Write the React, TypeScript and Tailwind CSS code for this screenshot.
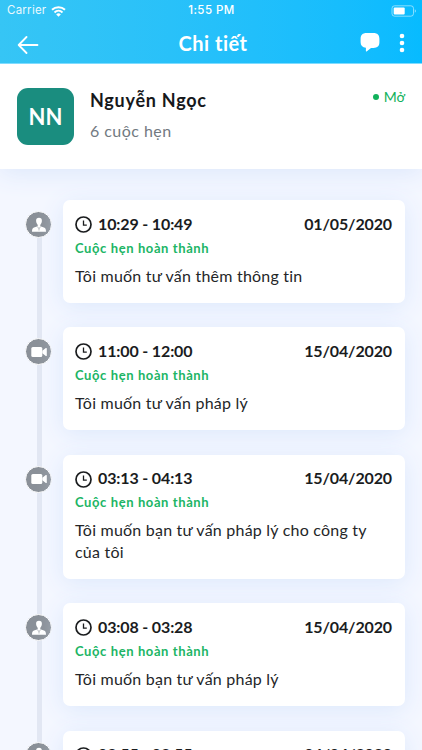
type Appointment = {
  kind: 'person' | 'video';
  time: string;
  date: string;
  note: string;
};

const appointments: Appointment[] = [
  { kind: 'person', time: '10:29 - 10:49', date: '01/05/2020', note: 'Tôi muốn tư vấn thêm thông tin' },
  { kind: 'video', time: '11:00 - 12:00', date: '15/04/2020', note: 'Tôi muốn tư vấn pháp lý' },
  { kind: 'video', time: '03:13 - 04:13', date: '15/04/2020', note: 'Tôi muốn bạn tư vấn pháp lý cho công ty của tôi' },
  { kind: 'person', time: '03:08 - 03:28', date: '15/04/2020', note: 'Tôi muốn bạn tư vấn pháp lý' },
  { kind: 'person', time: '02:55 - 02:55', date: '04/04/2020', note: 'Tôi muốn tư vấn pháp lý' },
];

function StatusBar() {
  return (
    <div className="grid h-[22px] grid-cols-3 items-center pl-[7px] pr-[5px] font-['Inter'] text-[11.5px] leading-none">
      <div className="flex items-center gap-[5px]">
        <span className="tracking-[0.25px] opacity-90">Carrier</span>
        <svg width="15" height="11" viewBox="0 0 15 11" fill="none" stroke="currentColor" strokeWidth="2">
          <path d="M1 3.7a9.6 9.6 0 0 1 13 0" />
          <path d="M3.5 6.4a5.9 5.9 0 0 1 8 0" />
          <path d="M7.5 10.8 5.2 8.4a3.3 3.3 0 0 1 4.6 0z" fill="currentColor" stroke="none" />
        </svg>
      </div>
      <span className="-ml-px text-center text-[11.5px] font-medium tracking-[0.45px]">1:55 PM</span>
      <svg className="justify-self-end" width="26" height="12" viewBox="0 0 26 12">
        <rect x="1" y=".8" width="21.5" height="10.4" rx="2.6" fill="none" stroke="#fff" strokeOpacity=".5" />
        <rect x="2.7" y="2.5" width="11" height="7" rx="1" fill="#fff" />
        <path d="M23.8 4.2a2 2 0 0 1 0 3.6z" fill="#fff" fillOpacity=".55" />
      </svg>
    </div>
  );
}

function Header() {
  return (
    <header className="relative z-20 h-16 shrink-0 border-b border-[#7fdcff] bg-linear-to-r from-[#36c5f5] to-[#07bbff] text-white">
      <StatusBar />
      <div className="flex h-[42px] items-center justify-between px-[17px]">
        <svg className="mt-[3px]" width="22" height="18" viewBox="0 0 22 18" fill="none" stroke="currentColor" strokeWidth="1.8" strokeLinecap="round" strokeLinejoin="round">
          <path d="M20.5 9H1.9M9.5 1 1.7 9l7.8 8" />
        </svg>
        <h1 className="ml-[27px] text-[20px] font-bold tracking-[0.5px]">Chi tiết</h1>
        <div className="flex items-center gap-[19px]">
          <svg width="20" height="20" viewBox="0 0 20 20" fill="currentColor">
            <path d="M6.5 0h7c3.9 0 5.9 2.1 5.9 5.7v3.5c0 3.6-2 5.7-5.9 5.7H11l-4.4 3.5c-.4.3-.7.1-.7-.3v-3.3C2.4 14.4.6 12.4.6 9.2V5.7C.6 2.1 2.6 0 6.5 0z" />
          </svg>
          <svg className="-mt-px" width="6" height="20" viewBox="0 0 6 20" fill="currentColor">
            <circle cx="3" cy="3" r="2.3" />
            <circle cx="3" cy="10" r="2.3" />
            <circle cx="3" cy="17" r="2.3" />
          </svg>
        </div>
      </div>
    </header>
  );
}

function Profile() {
  return (
    <section className="flex h-[105px] shrink-0 items-start bg-white px-[17px] pt-6 shadow-[0_4px_24px_#dce7fb]">
      <div className="flex size-[57px] items-center justify-center rounded-[11px] bg-[#1a8d7f] text-[22px] font-bold text-white">NN</div>
      <div className="ml-4 flex-1">
        <h2 className="text-[18px] font-bold leading-6 tracking-[0.75px] text-[#16181b]">Nguyễn Ngọc</h2>
        <p className="mt-[7px] text-[16px] leading-6 tracking-[0.45px] text-[#727981]">6 cuộc hẹn</p>
      </div>
      <div className="flex items-center gap-[5px] text-[14px] leading-[18px] text-[#11b15b]">
        <span className="size-1.5 rounded-full bg-[#11b15b]" />
        Mở
      </div>
    </section>
  );
}

function KindBadge({ kind }: { kind: Appointment['kind'] }) {
  return (
    <div className="mt-[11px] flex size-[27px] shrink-0 items-center justify-center rounded-full border-[1.5px] border-white bg-[#8a9098] text-white">
      {kind === 'person' ? (
        <svg width="16" height="16" viewBox="0 0 16 16">
          <path fill="currentColor" d="M8 .8c2 0 3 1.2 2.9 3.2C10.8 6.2 9.7 8 8 8S5.200 6.200 5.100 4C5 2 6 .8 8 .8z" />
          <path fill="currentColor" d="M6.700 7h2.600v2.200l3.700 1.300c1.300.5 2 1.500 2 4.200H1c0-2.700.7-3.700 2-4.200l3.700-1.300z" />
          <path d="m6.300 9.600 1.700 2 1.700-2M8 11.400v2.100" fill="none" stroke="#8a9098" strokeWidth=".6" />
        </svg>
      ) : (
        <svg width="16" height="12" viewBox="0 0 16 12" fill="currentColor">
          <rect x=".3" y="1" width="11" height="10" rx="1.5" />
          <path d="m11.3 4.8 3.5-2.7c.5-.4 1-.2 1 .4v7c0 .6-.5.8-1 .4l-3.5-2.7z" />
        </svg>
      )}
    </div>
  );
}

function AppointmentRow({ kind, time, date, note }: Appointment) {
  return (
    <li className="flex items-start">
      <KindBadge kind={kind} />
      <article className="ml-[10.5px] flex-1 rounded-[7px] bg-white pb-[17px] pl-[12.5px] pr-[13px] pt-[11.5px] shadow-[0_4px_24px_#dce8fc]">
        <div className="flex h-6 items-center text-[16px] font-bold leading-6 tracking-[-0.14px] text-[#1a1c1e]">
          <svg className="mt-[2px]" width="17" height="17" viewBox="0 0 17 17" fill="none" stroke="currentColor" strokeWidth="1.7">
            <circle cx="8.5" cy="8.5" r="7.5" />
            <path d="M8.5 4.5v4.7h3.3" strokeWidth="1.3" />
          </svg>
          <span className="ml-1.5 flex-1">{time}</span>
          <span>{date}</span>
        </div>
        <p className="text-[13px] font-bold leading-6 tracking-[0.6px] text-[#20b565]">Cuộc hẹn hoàn thành</p>
        <p className="mt-[5px] text-[16px] leading-[21.5px] tracking-[0.22px] text-[#242628]">{note}</p>
      </article>
    </li>
  );
}

export default function App() {
  return (
    <div className="flex h-[750px] w-[422px] flex-col overflow-hidden bg-[#f4f7ff] font-['Lato','Noto_Sans',sans-serif]">
      <Header />
      <Profile />
      <main className="relative min-h-0 flex-1 overflow-hidden pl-[25px] pr-[17px] pt-[31px]">
        <div className="absolute bottom-0 left-[37px] top-[56px] w-[5px] bg-[#e2e7f3]" />
        <ul className="relative flex flex-col gap-[24.3px]">
          {appointments.map((item) => (
            <AppointmentRow key={item.time} {...item} />
          ))}
        </ul>
      </main>
    </div>
  );
}
